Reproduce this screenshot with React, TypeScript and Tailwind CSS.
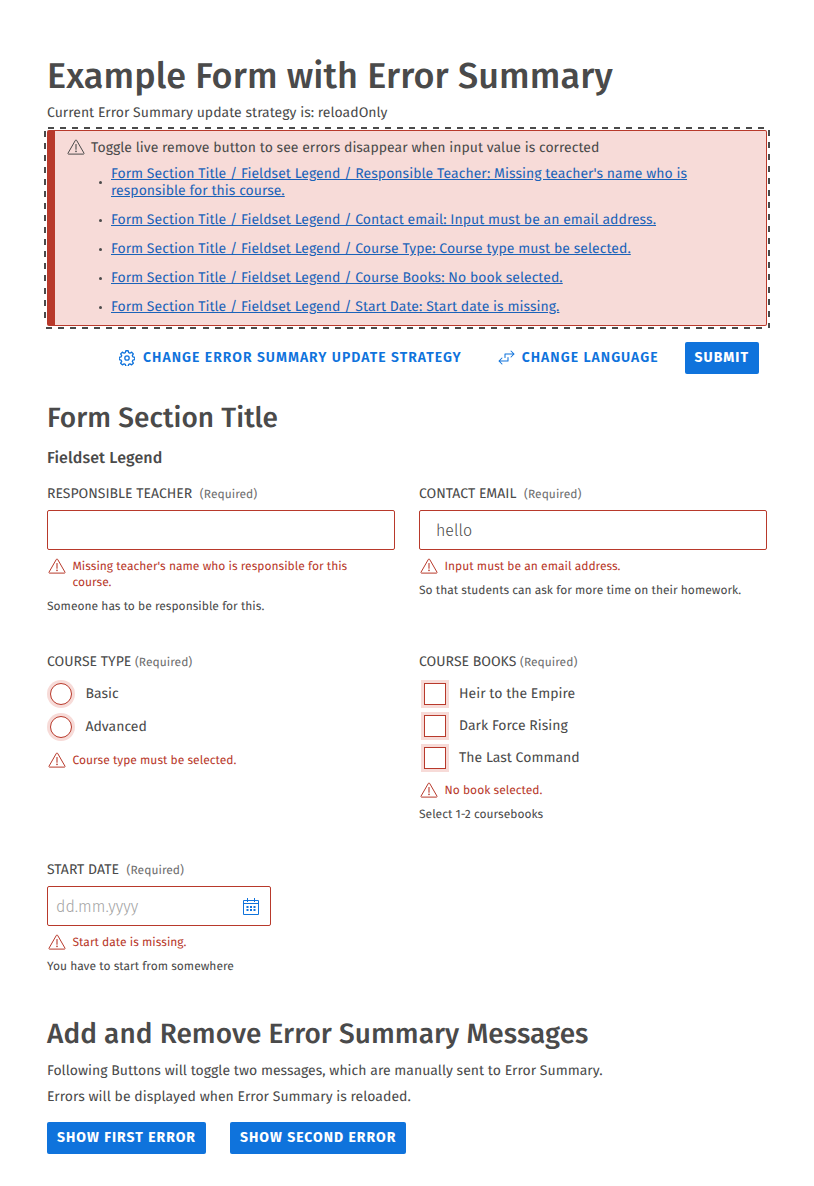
import type { ReactNode } from "react";

function WarningIcon({ className = "" }: { className?: string }) {
  return (
    <svg viewBox="0 0 18 16" fill="none" stroke="currentColor" className={`h-4 w-[18px] shrink-0 ${className}`}>
      <path d="M8.4 1.3a.7.7 0 0 1 1.2 0l7.4 12.9a.6.6 0 0 1-.6.9H1.600a.6.6 0 0 1-.6-.9z" strokeWidth="1" strokeLinejoin="round" />
      <path d="M9 5.600v4.600" strokeWidth="1.100" strokeLinecap="round" />
      <circle cx="9" cy="12.400" r=".8" fill="currentColor" stroke="none" />
    </svg>
  );
}

function GearIcon() {
  return (
    <svg viewBox="1 1 22 22" fill="none" stroke="currentColor" strokeWidth="1.800" strokeLinejoin="round" className="size-4">
      <circle cx="12" cy="12" r="3" />
      <path d="M10.400 2h3.200l.7 2.700 1.700.7 2.400-1.400 2.300 2.300-1.400 2.400.7 1.700 2.700.7v3.200l-2.700.7-.7 1.700 1.400 2.400-2.300 2.300-2.400-1.400-1.700.7-.7 2.700h-3.200l-.7-2.700-1.700-.7-2.400 1.400-2.300-2.300 1.400-2.400-.7-1.700-2.700-.7v-3.200l2.700-.7.7-1.700-1.400-2.400 2.300-2.300 2.400 1.400 1.700-.7z" />
    </svg>
  );
}

function SwapIcon() {
  return (
    <svg viewBox="0 0 18 18" fill="none" stroke="currentColor" strokeWidth="1.050" strokeLinecap="round" strokeLinejoin="round" className="size-[18px]">
      <path d="M8 8.500V5h9M14 2l3 3-3 3" />
      <path d="M11 8.500V12H2M5 9l-3 3 3 3" />
    </svg>
  );
}

function CalendarIcon() {
  return (
    <svg viewBox="0 0 16 17" fill="none" stroke="currentColor" className="h-[17px] w-4 text-[#0f73dc]">
      <path d="M.5 2.500h15v14H.5zM.5 5.500h15M4.500 0v4M11.500 0v4" />
      <path d="M3.500 9h9M3.500 12h9" strokeWidth="2" strokeDasharray="2 1.500" />
    </svg>
  );
}

const errors = [
  "Responsible Teacher: Missing teacher's name who is responsible for this course.",
  "Contact email: Input must be an email address.",
  "Course Type: Course type must be selected.",
  "Course Books: No book selected.",
  "Start Date: Start date is missing.",
];

function ErrorSummary() {
  return (
    <div className="-mx-[3px] mt-1.5 bg-[image:repeating-linear-gradient(90deg,#4a4a4a_0_6px,transparent_6px_12.04px),repeating-linear-gradient(90deg,#4a4a4a_0_6px,transparent_6px_12.04px),repeating-linear-gradient(180deg,#4a4a4a_0_6px,transparent_6px_12.04px),repeating-linear-gradient(180deg,#4a4a4a_0_6px,transparent_6px_12.04px)] bg-[length:720px_2px,720px_2px,2px_192px,2px_198px] bg-[position:4px_0px,2px_200px,0px_4px,724px_3px] bg-no-repeat p-[3px]">
      <section className="h-[196px] rounded-[2px] border border-l-8 border-[#b8392b] bg-[#f7dbd8] pt-2 pr-10 pl-3">
        <div className="flex gap-1.5 leading-[17px]">
          <WarningIcon />
          <p>Toggle live remove button to see errors disappear when input value is corrected</p>
        </div>
        <ul className="mt-[9px] flex flex-col gap-3 pl-8">
          {errors.map((error) => (
            <li key={error} className="flex items-center gap-[9px] leading-[17px]">
              <span className="mt-px size-[3px] shrink-0 rounded-full bg-[#4a4a4a]" />
              <a href="#form" className="tracking-[0.040px] text-[#1b63b9] underline">
                {`Form Section Title / Fieldset Legend / ${error}`}
              </a>
            </li>
          ))}
        </ul>
      </section>
    </div>
  );
}

function TextButton({ icon, children }: { icon: ReactNode; children: ReactNode }) {
  return (
    <button className="flex h-8 items-center gap-1 pr-2.5 pl-1.5 font-semibold tracking-[1px] text-[#0f73dc]">
      <span className="flex w-6 justify-center">{icon}</span>
      {children}
    </button>
  );
}

function PrimaryButton({ children }: { children: ReactNode }) {
  return (
    <button className="h-8 rounded-[2px] bg-[#0f73dc] px-2.5 font-bold tracking-[1px] text-white">{children}</button>
  );
}

function Label({ children, tight = false }: { children: string; tight?: boolean }) {
  return (
    <div className={`flex items-baseline leading-[17px] ${tight ? "gap-[3.600px]" : "gap-[7.600px]"}`}>
      <span className="tracking-normal">{children}</span>
      <span className="text-xs leading-[14px] tracking-[0.050px] text-[#6e6e6e]">(Required)</span>
    </div>
  );
}

function FieldError({ children }: { children: ReactNode }) {
  return (
    <div className="flex gap-[6.500px] pl-px text-xs text-[#b8392b]">
      <WarningIcon />
      <p className="max-w-[290px] pt-px">{children}</p>
    </div>
  );
}

function Help({ children }: { children: ReactNode }) {
  return <p className="mt-2 text-xs">{children}</p>;
}

const inputClass = "h-10 w-full rounded-[2px] border border-[#b8392b] bg-white text-base font-light outline-none";

export default function App() {
  return (
    <main className="h-[1186px] overflow-hidden bg-white px-[47px] pt-[55px] font-['Fira_Sans','Noto_Sans',sans-serif] text-sm tracking-[0.024px] text-[#4a4a4a] [text-rendering:geometricPrecision]">
      <h1 className="text-4xl leading-[43px] font-medium tracking-[0.090px]">Example Form with Error Summary</h1>
      <p className="mt-1.5 leading-[17px]">Current Error Summary update strategy is: reloadOnly</p>
      <ErrorSummary />
      <div className="mt-[13px] flex justify-end gap-4 pr-2">
        <TextButton icon={<GearIcon />}>CHANGE ERROR SUMMARY UPDATE STRATEGY</TextButton>
        <TextButton icon={<SwapIcon />}>CHANGE LANGUAGE</TextButton>
        <PrimaryButton>SUBMIT</PrimaryButton>
      </div>

      <h2 className="mt-7 text-[28px] leading-[34px] font-medium tracking-[0.070px]">Form Section Title</h2>
      <h3 className="mt-[13px] text-base leading-[19px] font-medium tracking-[0.120px]">Fieldset Legend</h3>

      <div id="form" className="mt-[17px] grid grid-cols-2 grid-rows-[168px_208px_156px] gap-x-6">
        <div>
          <Label>RESPONSIBLE TEACHER</Label>
          <input className={`${inputClass} mt-2 mb-2 block px-4`} />
          <FieldError>Missing teacher's name who is responsible for this course.</FieldError>
          <Help>Someone has to be responsible for this.</Help>
        </div>
        <div>
          <Label>CONTACT EMAIL</Label>
          <input className={`${inputClass} mt-2 mb-2 block px-4`} defaultValue="hello" />
          <FieldError>Input must be an email address.</FieldError>
          <Help>So that students can ask for more time on their homework.</Help>
        </div>
        <div>
          <Label tight>COURSE TYPE</Label>
          <div className="mt-[13px] mb-3.5 flex flex-col gap-[11px] pl-[3.400px]">
            {["Basic", "Advanced"].map((label) => (
              <label key={label} className="flex h-[22px] items-center gap-[13px]">
                <input type="radio" name="type" className="size-[22px] appearance-none rounded-full border border-[#b8392b] bg-white ring-3 ring-[#f7dbd8]" />
                {label}
              </label>
            ))}
          </div>
          <FieldError>Course type must be selected.</FieldError>
        </div>
        <div>
          <Label tight>COURSE BOOKS</Label>
          <div className="mt-[13px] mb-[13px] flex flex-col gap-2.5 pl-[5px]">
            {["Heir to the Empire", "Dark Force Rising", "The Last Command"].map((label) => (
              <label key={label} className="flex h-[22px] items-center gap-[13px]">
                <input type="checkbox" className="size-[22px] appearance-none border border-[#b8392b] bg-white ring-3 ring-[#f7dbd8]" />
                {label}
              </label>
            ))}
          </div>
          <FieldError>No book selected.</FieldError>
          <Help>Select 1-2 coursebooks</Help>
        </div>
        <div>
          <Label>START DATE</Label>
          <div className="relative mt-2 mb-2 w-56">
            <input className={`${inputClass} block px-2 placeholder:text-[#a3a3a3]`} placeholder="dd.mm.yyyy" />
            <span className="absolute top-3 right-3">
              <CalendarIcon />
            </span>
          </div>
          <FieldError>Start date is missing.</FieldError>
          <Help>You have to start from somewhere</Help>
        </div>
      </div>

      <h2 className="mt-px text-[28px] leading-[34px] font-medium tracking-[0.060px]">Add and Remove Error Summary Messages</h2>
      <p className="mt-1.5 leading-[26px]">
        Following Buttons will toggle two messages, which are manually sent to Error Summary.
        <br />
        Errors will be displayed when Error Summary is reloaded.
      </p>
      <div className="mt-3 flex gap-6">
        <PrimaryButton>SHOW FIRST ERROR</PrimaryButton>
        <PrimaryButton>SHOW SECOND ERROR</PrimaryButton>
      </div>
    </main>
  );
}
